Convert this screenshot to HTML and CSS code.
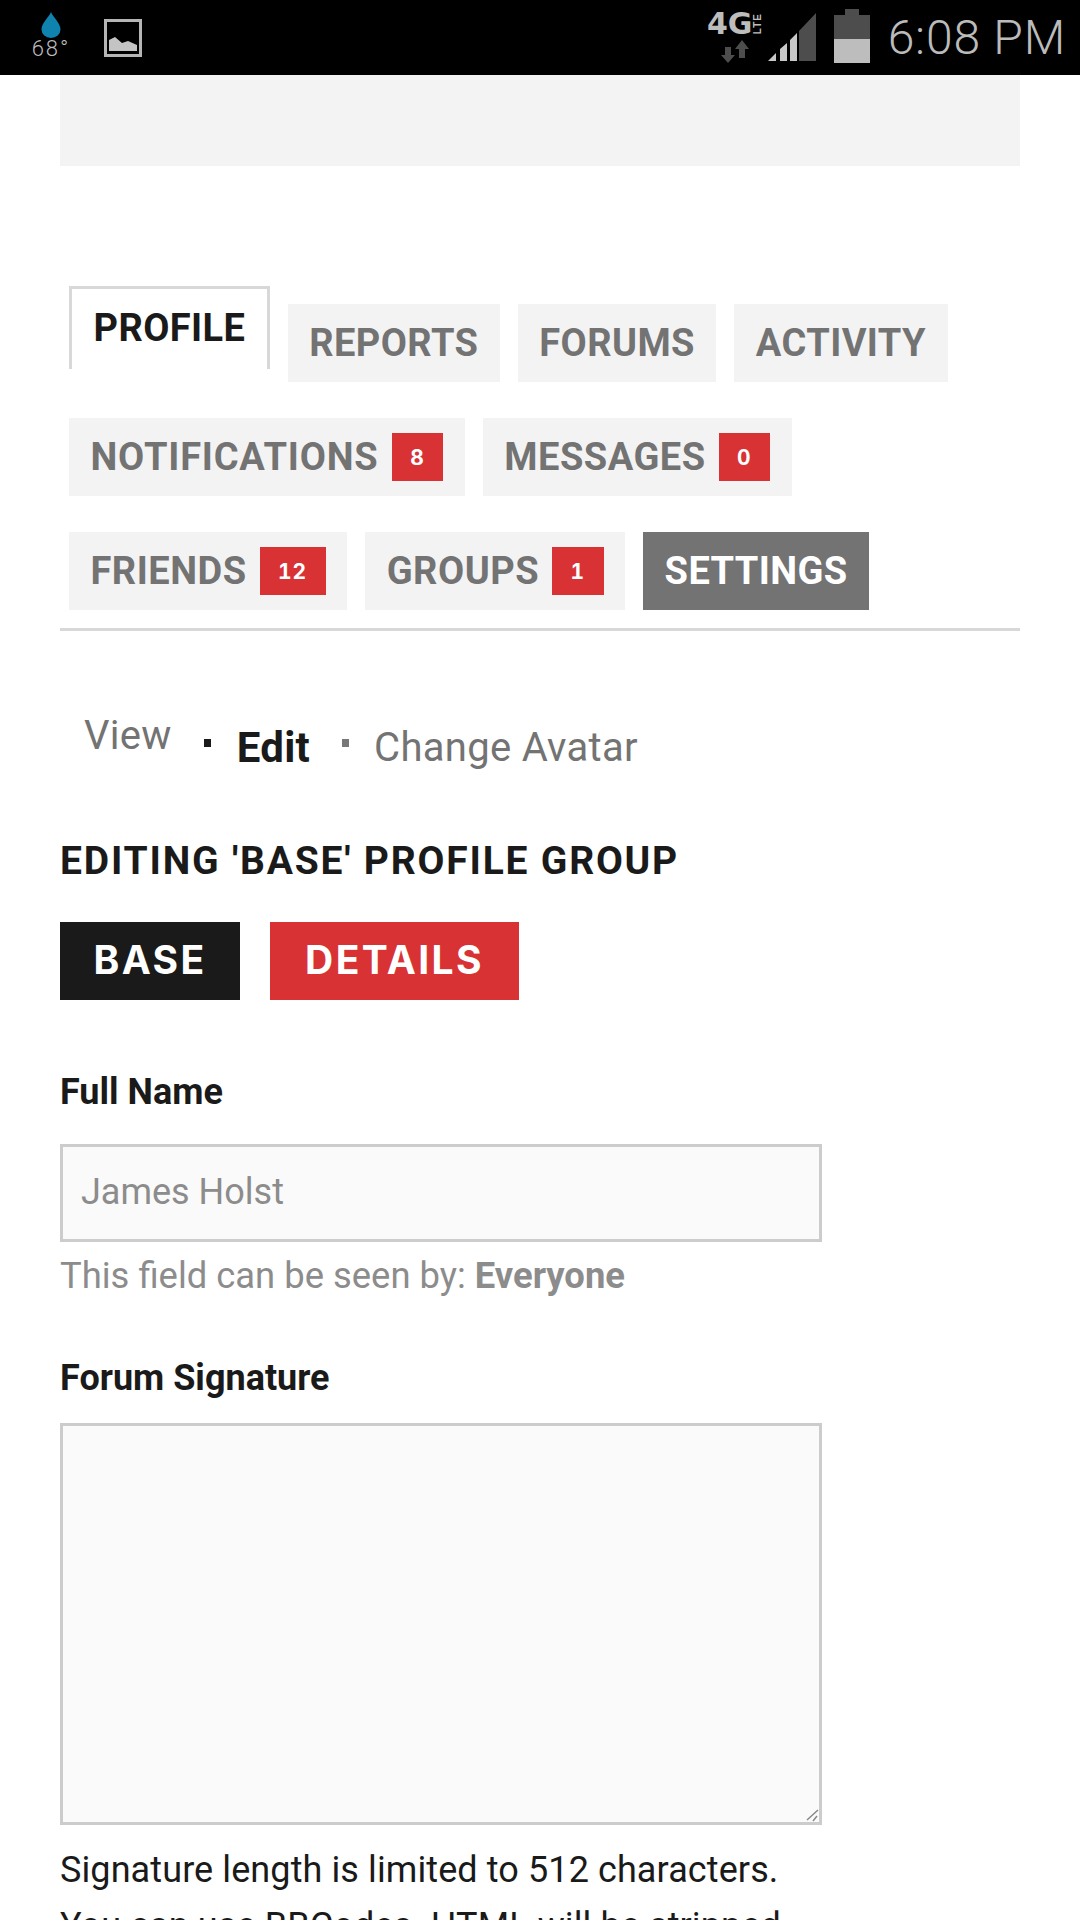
FILE: index.html
```html
<!DOCTYPE html>
<html lang="en">
<head>
    <meta charset="UTF-8">
    <meta name="viewport" content="width=device-width, initial-scale=1.0">
    <title>Edit Profile</title>
    <link rel="stylesheet" href="styles.css">
</head>
<body>
    <div class="statusbar">
        <div class="status-left">
            <div class="weather">
                <svg class="drop" width="20" height="26" viewBox="0 0 20 26"><path d="M10 0C12 5 19.500 11 19.500 17.500A9.500 8.500 0 0 1 0.500 17.500C0.500 11 8 5 10 0Z" fill="#0f82ad"/></svg>
                <span class="temp">68°</span>
            </div>
            <svg class="pic" width="38" height="38" viewBox="0 0 38 38"><rect x="1.500" y="1.500" width="35" height="35" fill="none" stroke="#b5b5b5" stroke-width="3"/><path d="M5 32V21L11 18L18 24L24 22L33 26V32Z" fill="#c4c4c4"/></svg>
        </div>
        <div class="status-right">
            <div class="net">
                <div class="net-top"><span class="net-4g">4G</span><span class="net-lte">LTE</span></div>
                <svg class="net-arrows" width="28" height="24" viewBox="0 0 28 24"><path d="M4 7H10V15H14L7 23L0 15H4Z" fill="#4d4d4d"/><path d="M21 0L28 9H24V18H18V9H14Z" fill="#4d4d4d"/></svg>
            </div>
            <svg class="signal" width="48" height="48" viewBox="0 0 48 48"><path d="M0 48L8 40V48Z M12 48V36L19 30V48Z M22 48V27L29 20V48Z" fill="#c8c8c8"/><path d="M31 48V18L48 0V48Z" fill="#4d4d4d"/></svg>
            <svg class="battery" width="36" height="54" viewBox="0 0 36 54"><rect x="11" y="0" width="14" height="6" fill="#4d4d4d"/><rect x="0" y="6" width="36" height="24" fill="#4d4d4d"/><rect x="0" y="30" width="36" height="24" fill="#bdbdbd"/></svg>
            <span class="clock">6:08 PM</span>
        </div>
    </div>

    <div class="page">
        <div class="ad-box"></div>

        <div class="tabs">
            <a class="tab current">PROFILE</a>
            <a class="tab">REPORTS</a>
            <a class="tab">FORUMS</a>
            <a class="tab">ACTIVITY</a>
            <a class="tab with-count wide">NOTIFICATIONS <span class="count">8</span></a>
            <a class="tab with-count">MESSAGES <span class="count">0</span></a>
            <a class="tab with-count">FRIENDS <span class="count">12</span></a>
            <a class="tab with-count">GROUPS <span class="count">1</span></a>
            <a class="tab selected">SETTINGS</a>
        </div>

        <div class="subnav">
            <a class="sub-view">View</a>
            <span class="dot dark"></span>
            <a class="sub-edit">Edit</a>
            <span class="dot"></span>
            <a class="sub-avatar">Change Avatar</a>
        </div>

        <h4 class="group-title">EDITING 'BASE' PROFILE GROUP</h4>

        <div class="group-btns">
            <a class="btn black">BASE</a>
            <a class="btn red">DETAILS</a>
        </div>

        <div class="field">
            <label class="field-label">Full Name</label>
            <div class="input-box">James Holst</div>
            <p class="field-note">This field can be seen by: <b>Everyone</b></p>
        </div>

        <div class="field sig-field">
            <label class="field-label">Forum Signature</label>
            <div class="textarea-box">
                <svg class="grip" width="14" height="14" viewBox="0 0 14 14"><path d="M2 12L13 2M8 13L12 8" stroke="#888" stroke-width="1.500" fill="none"/></svg>
            </div>
            <p class="sig-help">Signature length is limited to 512 characters.<br>You can use BBCodes. HTML will be stripped.</p>
        </div>
    </div>
</body>
</html>
```
FILE: styles.css
```css
html, body {
    margin: 0;
    height: 1920px;
    overflow: hidden;
    background-color: #fff;
}
body {
    font-family: Roboto, "Liberation Sans", sans-serif;
    color: #1a1a1a;
}

/* status bar */
.statusbar {
    display: flex;
    justify-content: space-between;
    height: 75px;
    background-color: #000;
}
.status-left {
    display: flex;
    align-items: flex-start;
    padding-left: 32px;
}
.weather {
    display: flex;
    flex-direction: column;
    align-items: center;
    width: 38px;
    padding-top: 12px;
}
.drop {
    flex-shrink: 0;
}
.temp {
    font-size: 22px;
    font-weight: 300;
    line-height: 22px;
    letter-spacing: 2px;
    color: #bbb;
    white-space: nowrap;
}
.pic {
    margin: 19px 0 0 34px;
}
.status-right {
    display: flex;
    align-items: flex-start;
    padding-right: 14px;
}
.net {
    display: flex;
    flex-direction: column;
    align-items: center;
    width: 55px;
    margin-top: 13px;
}
.net-top {
    display: flex;
    align-items: center;
    height: 22px;
}
.net-4g {
    font-family: "DejaVu Sans", sans-serif;
    font-weight: bold;
    font-size: 30px;
    line-height: 22px;
    color: #bdbdbd;
}
.net-lte {
    margin-left: 1px;
    font-family: "Liberation Sans", sans-serif;
    font-weight: bold;
    font-size: 10px;
    line-height: 10px;
    letter-spacing: 1px;
    color: #bdbdbd;
    writing-mode: vertical-rl;
    transform: rotate(180deg);
}
.net-arrows {
    margin-top: 5px;
}
.signal {
    margin: 13px 0 0 5px;
}
.battery {
    margin: 9px 0 0 18px;
}
.clock {
    margin-left: 18px;
    font-size: 48px;
    font-weight: 300;
    line-height: 75px;
    letter-spacing: 0.8px;
    color: #bbb;
}

/* page */
.page {
    padding: 0 60px;
}
.ad-box {
    height: 91px;
    background-color: #f3f3f3;
}

/* tabs */
.tabs {
    display: flex;
    flex-wrap: wrap;
    align-items: flex-end;
    gap: 36px 18px;
    margin-top: 120px;
    padding: 0 0 18px 9px;
    border-bottom: 3px solid #d8d8d8;
}
.tab {
    display: flex;
    align-items: center;
    box-sizing: border-box;
    height: 78px;
    padding: 0 21.5px;
    background-color: #f3f3f3;
    font-size: 38px;
    font-weight: bold;
    letter-spacing: 0.4px;
    color: #737373;
    white-space: pre;
}
.tab.with-count {
    letter-spacing: 0.5px;
}
.tab.wide {
    letter-spacing: 0.8px;
}
.tab.current {
    height: 83px;
    margin-bottom: 13px;
    padding-bottom: 2px;
    background-color: #fff;
    border: 3px solid #d8d8d8;
    border-bottom: none;
    color: #1a1a1a;
}
.tab.selected {
    background-color: #737373;
    color: #fff;
}
.count {
    display: flex;
    align-items: center;
    justify-content: center;
    height: 48px;
    margin-left: 3px;
    padding: 0 18.5px;
    background-color: #d83235;
    font-family: Inter, Roboto, sans-serif;
    font-size: 21px;
    font-variant-numeric: tabular-nums;
    letter-spacing: 1px;
    color: #fff;
}

/* view / edit / change avatar */
.subnav {
    display: flex;
    align-items: center;
    height: 48px;
    margin-top: 92px;
    padding-left: 24px;
    font-size: 40px;
    letter-spacing: 0.3px;
    color: #737373;
}
.sub-view {
    margin-top: -24px;
}
.sub-edit {
    font-size: 42px;
    font-weight: bold;
    color: #1a1a1a;
}
.dot {
    width: 7px;
    height: 8px;
    margin: -8px 25px 0 32px;
    background-color: #777;
}
.dot.dark {
    margin: -8px 26px 0 32px;
    background-color: #1a1a1a;
}

.group-title {
    margin: 68px 0 0;
    font-size: 39px;
    font-weight: bold;
    line-height: 44px;
    letter-spacing: 1.8px;
}
.group-btns {
    display: flex;
    gap: 30px;
    margin-top: 39px;
}
.btn {
    display: flex;
    align-items: center;
    justify-content: center;
    box-sizing: border-box;
    height: 78px;
    padding-bottom: 3px;
    font-family: Inter, Roboto, sans-serif;
    font-size: 39px;
    font-weight: bold;
    letter-spacing: 2.4px;
    color: #fff;
}
.btn.black {
    width: 180px;
    background-color: #1a1a1a;
}
.btn.red {
    width: 249px;
    background-color: #d83235;
}

/* form */
.field {
    margin-top: 72px;
}
.sig-field {
    margin-top: 61px;
}
.field-label {
    display: block;
    font-size: 36px;
    font-weight: bold;
    line-height: 40px;
}
.input-box {
    box-sizing: border-box;
    width: 762px;
    height: 98px;
    margin-top: 32px;
    padding: 0 18px;
    background-color: #fafafa;
    border: 3px solid #ccc;
    font-size: 36px;
    line-height: 90px;
    color: #8c8c8c;
}
.field-note {
    margin: 13px 0 0;
    font-size: 36.4px;
    line-height: 42px;
    color: #8c8c8c;
}
.textarea-box {
    box-sizing: border-box;
    display: flex;
    align-items: flex-end;
    justify-content: flex-end;
    width: 762px;
    height: 402px;
    margin-top: 25px;
    background-color: #fafafa;
    border: 3px solid #ccc;
}
.sig-help {
    margin: 17px 0 0;
    font-size: 36px;
    line-height: 56px;
    letter-spacing: 0.1px;
}
```
